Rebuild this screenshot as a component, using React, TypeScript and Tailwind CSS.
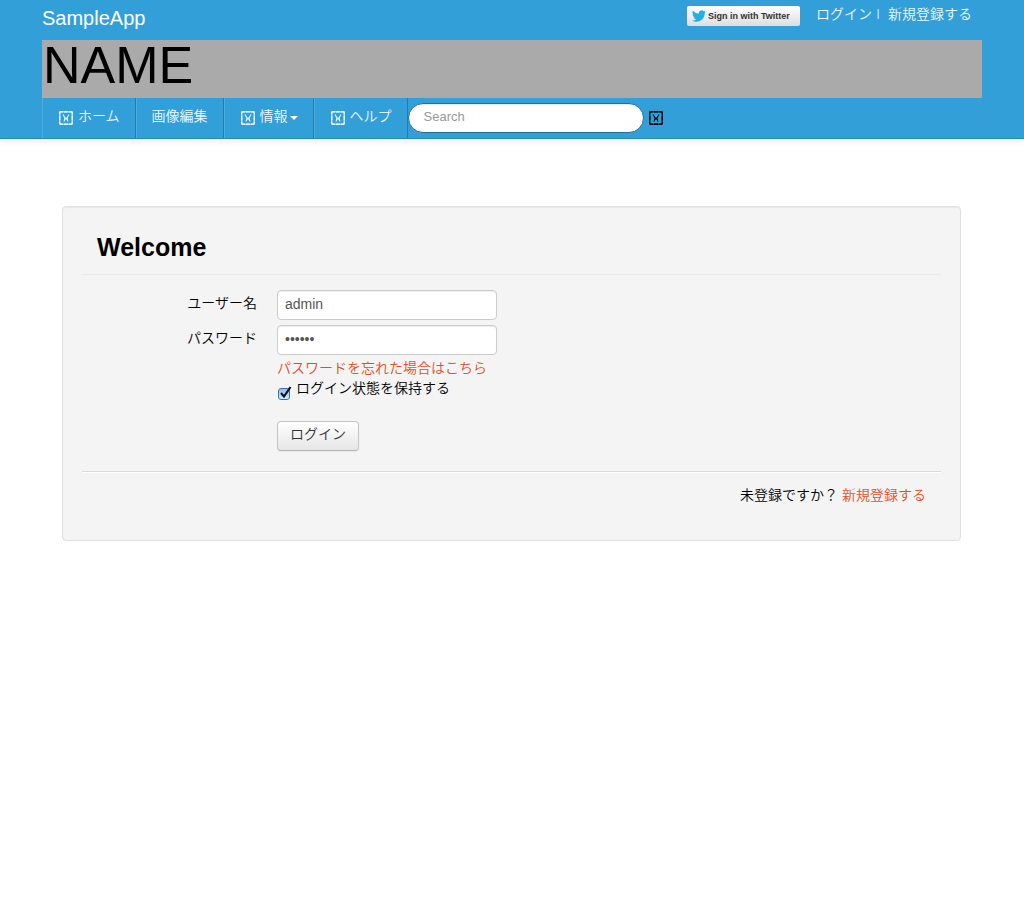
import { useState } from "react";
import type { ReactNode } from "react";

function GlyphIcon() {
  return (
    <svg viewBox="0 0 14 14" className="size-3.5 shrink-0" fill="none" stroke="currentColor" aria-hidden="true">
      <rect x="0.75" y="0.75" width="12.5" height="12.5" rx="1" strokeWidth="1.3" strokeOpacity="0.65" />
      <path
        d="M0.75 3.5V1.5Q0.75 0.75 1.5 0.75H4M5 0.75H9M10 0.75H12.5Q13.25 0.75 13.25 1.5V3.5M13.25 4.5V9.5M13.25 10.5V12.5Q13.25 13.25 12.5 13.25H10M9 13.25H5M4 13.25H1.5Q0.75 13.25 0.75 12.5V10.5M0.75 9.5V4.5"
        strokeWidth="1.3"
      />
      <path d="M4 3.5L6 7M10 3.5L8 7M5 10.5L6.5 6.5M9 10.5L7.5 6.5M5 8H9" strokeWidth="1.1" />
    </svg>
  );
}

function TwitterBird() {
  return (
    <svg viewBox="0 0 24 24" className="size-3.5 shrink-0" fill="#1fb0e6" aria-hidden="true">
      <path d="M23.95 4.57a10 10 0 0 1-2.82.77 4.96 4.96 0 0 0 2.16-2.72 9.9 9.9 0 0 1-3.12 1.18 4.92 4.92 0 0 0-8.38 4.48A13.93 13.93 0 0 1 1.67 3.15a4.93 4.93 0 0 0 1.52 6.57 4.9 4.9 0 0 1-2.23-.61v.06a4.92 4.92 0 0 0 3.95 4.83 5 5 0 0 1-2.21.08 4.94 4.94 0 0 0 4.6 3.42A9.87 9.87 0 0 1 0 19.54a13.99 13.99 0 0 0 7.55 2.21c9.14 0 14.31-7.72 14.31-14.42 0-.1.03-1.55 2.09-2.76z" />
    </svg>
  );
}

function NavItem({ icon, caret, children }: { icon?: boolean; caret?: boolean; children: ReactNode }) {
  return (
    <li className="border-r border-[#237daa]">
      <a href="#" className="flex h-10 items-center border-l border-[#4baddd] px-[15px] text-[#ecf8fe]">
        {icon && (
          <span className="mr-[5px] pl-px">
            <GlyphIcon />
          </span>
        )}
        <span className="pb-1">{children}</span>
        {caret && (
          <svg viewBox="0 0 8 4" className="ml-0.5 h-1 w-2" fill="#fff" aria-hidden="true">
            <path d="M0 0H8L4 4Z" />
          </svg>
        )}
      </a>
    </li>
  );
}

const fieldClass =
  "h-[30px] w-[220px] max-w-full rounded border border-[#ccc] bg-white px-[7px] pb-0.5 text-sm text-[#555] shadow-[inset_0_1px_1px_rgba(0,0,0,0.075)] outline-none";

export default function App() {
  const [user, setUser] = useState("admin");
  const [password, setPassword] = useState("secret");
  const [remember, setRemember] = useState(true);

  return (
    <div className="font-['Liberation_Sans','Noto_Sans_CJK_JP',sans-serif] text-sm leading-5 font-[350] text-black">
      <header className="border-b border-[#2c87b8] bg-[#339fd9] px-[42px] shadow-[0_1px_8px_rgba(0,0,0,0.1)]">
        <div className="mx-auto max-w-[940px]">
          <div className="flex h-10 items-start justify-between">
            <a href="#" className="pt-2 text-xl leading-5 text-white">SampleApp</a>
            <div className="flex items-start pr-2.5 text-[#ecf8fe]">
              <button
                type="button"
                className="mt-1.5 mr-4 flex h-5 w-[113px] items-center gap-0.5 rounded-xs bg-linear-to-b from-white to-[#dedede] pl-[5px] text-[9px] leading-none font-bold whitespace-nowrap text-[#333]"
              >
                <TwitterBird />
                Sign in with Twitter
              </button>
              <nav className="flex pt-1" aria-label="アカウント">
                <a href="#">ログイン</a>
                <span className="w-4 pr-1 text-center text-[10px]">|</span>
                <a href="#">新規登録する</a>
              </nav>
            </div>
          </div>

          <h1 className="h-[58px] bg-[#aaa] pl-px text-[52px] leading-[50px] font-normal">NAME</h1>

          <div className="flex items-center">
            <nav aria-label="メイン">
              <ul className="flex">
                <NavItem icon>ホーム</NavItem>
                <NavItem>画像編集</NavItem>
                <NavItem icon caret>情報</NavItem>
                <NavItem icon>ヘルプ</NavItem>
              </ul>
            </nav>
            <form role="search" className="flex items-center gap-[5px]" onSubmit={(e) => e.preventDefault()}>
              <input
                type="search"
                aria-label="Search"
                placeholder="Search"
                className="h-[30px] w-[236px] rounded-full border border-[#1f719a] bg-white px-[15px] pb-1 text-[13px] text-[#555] shadow-[inset_0_1px_2px_rgba(0,0,0,0.1)] outline-none placeholder:text-[#999]"
              />
              <button type="submit" aria-label="検索" className="text-black">
                <GlyphIcon />
              </button>
            </form>
          </div>
        </div>
      </header>

      <main className="pt-[67px] pr-[63px] pl-[62px]">
        <section className="mx-auto max-w-[899px] rounded border border-[#e0e0e0] bg-[#f4f4f4] px-[19px] pb-[35px] shadow-[inset_0_1px_1px_rgba(0,0,0,0.05)]">
          <h2 className="h-[68px] border-b border-[#ebebeb] pt-5 pl-[15px] text-[25px] leading-10 font-bold">
            Welcome
          </h2>

          <form onSubmit={(e) => e.preventDefault()}>
            <div className="grid grid-cols-[175px_1fr] gap-x-5 gap-y-[5px] pt-[15px]">
              <label htmlFor="user" className="pt-[3px] text-right">ユーザー名</label>
              <div className="flex">
                <input id="user" value={user} onChange={(e) => setUser(e.target.value)} className={fieldClass} />
              </div>
              <label htmlFor="password" className="pt-[3px] text-right">パスワード</label>
              <div className="flex">
                <input
                  id="password"
                  type="password"
                  value={password}
                  onChange={(e) => setPassword(e.target.value)}
                  className={fieldClass}
                />
              </div>
            </div>
            <div className="flex flex-col items-start pt-[3px] pl-[195px]">
              <a href="#" className="text-[#e0501f]">パスワードを忘れた場合はこちら</a>
              <label className="flex gap-1">
                <span className="relative mt-2 ml-px size-3.5">
                  <input
                    type="checkbox"
                    checked={remember}
                    onChange={(e) => setRemember(e.target.checked)}
                    className="peer mt-0.5 block size-3 appearance-none rounded-[3px] border border-[#4d6a9c] bg-linear-to-b from-[#93bdf0] to-[#c5f3ff]"
                  />
                  <svg
                    viewBox="0 0 14 14"
                    className="pointer-events-none absolute inset-0 hidden size-3.5 peer-checked:block"
                    fill="none"
                    stroke="#101020"
                    strokeWidth="2.2"
                    aria-hidden="true"
                  >
                    <path d="M3 7L6 10.5L12.5 1" />
                  </svg>
                </span>
                ログイン状態を保持する
              </label>
              <button
                type="submit"
                className="mt-[21px] h-[30px] rounded border border-[#c5c5c5] border-b-[#b3b3b3] bg-linear-to-b from-white to-[#e6e6e6] px-3 pb-1 text-[#333] shadow-[0_1px_2px_rgba(0,0,0,0.05)]"
              >
                ログイン
              </button>
            </div>
          </form>

          <p className="mt-5 border-t border-[#d9d9d9] pt-[13px] pr-[15px] text-right shadow-[inset_0_1px_0_#fff]">
            未登録ですか？ <a href="#" className="text-[#e0501f]">新規登録する</a>
          </p>
        </section>
      </main>
    </div>
  );
}
